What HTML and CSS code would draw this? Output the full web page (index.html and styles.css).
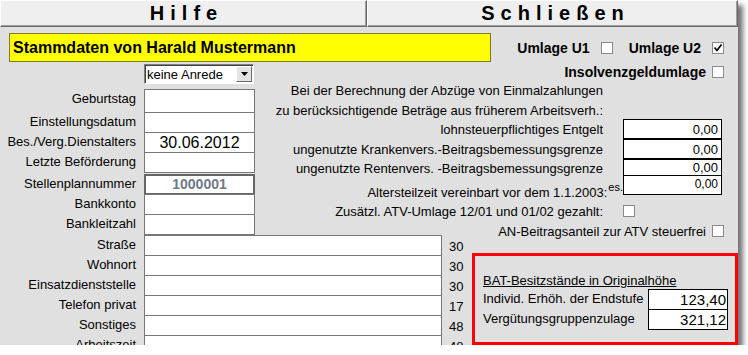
FILE: index.html
```html
<!DOCTYPE html>
<html lang="de">
<head>
    <meta charset="UTF-8">
    <title>Stammdaten</title>
    <link rel="stylesheet" href="styles.css">
</head>
<body>
    <div class="window">
        <div class="toolbar">
            <button class="tool-btn">Hilfe</button>
            <button class="tool-btn">Schließen</button>
        </div>

        <div class="head-row">
            <div class="title-bar">Stammdaten von Harald Mustermann</div>
            <div class="umlage">
                <span class="bold-label">Umlage U1</span>
                <span class="chk"></span>
                <span class="bold-label">Umlage U2</span>
                <span class="chk"><svg width="10" height="10" viewBox="0 0 10 10"><path d="M1.5 4.5 L4 7.5 L8.5 1.5" fill="none" stroke="#000" stroke-width="1.7"/></svg></span>
            </div>
        </div>

        <div class="upper">
            <div class="person">
                <div class="select-row">
                    <div class="select">
                        <span class="select-text">keine Anrede</span>
                        <span class="select-btn"><svg width="7" height="4" viewBox="0 0 7 4"><path d="M0 0 H7 L3.5 4 Z" fill="#000"/></svg></span>
                    </div>
                </div>
                <div class="field-row first"><label>Geburtstag</label><div class="field"></div></div>
                <div class="field-row"><label>Einstellungsdatum</label><div class="field"></div></div>
                <div class="field-row"><label>Bes./Verg.Dienstalters</label><div class="field date">30.06.2012</div></div>
                <div class="field-row"><label>Letzte Beförderung</label><div class="field"></div></div>
                <div class="field-row spaced"><label>Stellenplannummer</label><div class="field number">1000001</div></div>
                <div class="field-row"><label>Bankkonto</label><div class="field"></div></div>
                <div class="field-row"><label>Bankleitzahl</label><div class="field"></div></div>
            </div>

            <div class="calc">
                <div class="check-line insolvenz">
                    <span class="bold-label">Insolvenzgeldumlage</span>
                    <span class="chk"></span>
                </div>
                <div class="note">Bei der Berechnung der Abzüge von Einmalzahlungen</div>
                <div class="note short">zu berücksichtigende Beträge aus früherem Arbeitsverh.:</div>
                <div class="amount-row">
                    <span>lohnsteuerpflichtiges Entgelt</span>
                    <div class="money">0,00</div>
                </div>
                <div class="amount-row">
                    <span>ungenutzte Krankenvers.-Beitragsbemessungsgrenze</span>
                    <div class="money">0,00</div>
                </div>
                <div class="amount-row low">
                    <span>ungenutzte Rentenvers. -Beitragsbemessungsgrenze</span>
                    <div class="money">0,00</div>
                </div>
                <div class="amount-row alters">
                    <span>Altersteilzeit vereinbart vor dem 1.1.2003:<span class="ghost">es.</span></span>
                    <div class="money small">0,00</div>
                </div>
                <div class="amount-row">
                    <span>Zusätzl. ATV-Umlage 12/01 und 01/02 gezahlt:</span>
                    <span class="chk"></span>
                </div>
                <div class="check-line">
                    <span>AN-Beitragsanteil zur ATV steuerfrei</span>
                    <span class="chk"></span>
                </div>
            </div>
        </div>

        <div class="lower">
            <div class="address">
                <div class="field-row"><label>Straße</label><div class="field wide"></div><span class="len">30</span></div>
                <div class="field-row"><label>Wohnort</label><div class="field wide"></div><span class="len">30</span></div>
                <div class="field-row"><label>Einsatzdienststelle</label><div class="field wide"></div><span class="len">30</span></div>
                <div class="field-row"><label>Telefon privat</label><div class="field wide"></div><span class="len">17</span></div>
                <div class="field-row"><label>Sonstiges</label><div class="field wide"></div><span class="len">48</span></div>
                <div class="field-row"><label>Arbeitszeit</label><div class="field wide"></div><span class="len">48</span></div>
            </div>

            <div class="bat">
                <div class="bat-title">BAT-Besitzstände in Originalhöhe</div>
                <div class="bat-row">
                    <span>Individ. Erhöh. der Endstufe</span>
                    <div class="bat-value">123,40</div>
                </div>
                <div class="bat-row">
                    <span>Vergütungsgruppenzulage</span>
                    <div class="bat-value">321,12</div>
                </div>
            </div>
        </div>
    </div>
</body>
</html>
```

FILE: styles.css
```css
*{
    margin: 0;
    padding: 0;
    box-sizing: border-box;
}
body{
    background: #fff;
    font: 13px "Liberation Sans", Arial, sans-serif;
    color: #000;
}
.window{
    width: 738px;
    height: 345px;
    background: #e0e0e0;
    overflow: hidden;
    box-shadow: 5px 5px 5px rgba(0,0,0,.55);
}

/* Kopfzeile mit den beiden Knöpfen */
.toolbar{
    display: grid;
    grid-template-columns: 367px 1fr;
    height: 27px;
}
.tool-btn{
    font: bold 20px "Liberation Sans", Arial, sans-serif;
    letter-spacing: 6px;
    padding-left: 6px;
    color: #000;
    background: #efefef;
    border: 1px solid;
    border-color: #fff #696969 #696969 #fff;
    box-shadow: inset -1px -1px #a0a0a0;
}

.head-row{
    display: flex;
    align-items: center;
    height: 29px;
    margin-top: 6px;
    padding-left: 9px;
}
.title-bar{
    width: 482px;
    height: 29px;
    background: #ff0;
    border: 1px solid #7c7c2a;
    font-weight: bold;
    font-size: 16px;
    line-height: 27px;
    padding-left: 3px;
}
.umlage{
    margin-left: auto;
    padding-right: 14px;
    display: flex;
    align-items: center;
    .bold-label{
        margin-right: 11px;
    }
    .chk{
        margin-right: 16px;
    }
    .chk:last-child{
        margin-right: 0;
    }
}
.bold-label{
    font-weight: bold;
    font-size: 14px;
}
.chk{
    width: 12px;
    height: 12px;
    background: #fff;
    border: 1px solid #8a8a8a;
    display: inline-flex;
    align-items: center;
    justify-content: center;
}

/* oberer Block */
.upper{
    display: grid;
    grid-template-columns: 255px 1fr;
}
.select-row{
    height: 27px;
    padding: 2px 0 0 144px;
}
.select{
    width: 110px;
    height: 20px;
    background: #fff;
    border: 1px solid;
    border-color: #808080 #fff #fff #808080;
    box-shadow: inset 1px 1px #404040;
    display: flex;
    align-items: center;
    padding: 0 1px 0 2px;
    .select-text{
        flex: 1;
        line-height: 18px;
        padding-top: 1px;
    }
    .select-btn{
        width: 16px;
        height: 16px;
        background: #e4e4e4;
        border: 1px solid;
        border-color: #fff #6a6a6a #6a6a6a #fff;
        display: flex;
        align-items: center;
        justify-content: center;
    }
}

.field-row{
    display: flex;
    align-items: flex-start;
    height: 20px;
    label{
        width: 136px;
        margin-right: 8px;
        text-align: right;
        line-height: 20px;
        white-space: nowrap;
    }
}
.field-row.first{
    height: 23px;
    .field{
        height: 24px;
    }
}
.field-row.spaced{
    margin-top: 2px;
}
.field{
    width: 111px;
    height: 21px;
    background: #fff;
    border: 1px solid #777;
}
.field.date{
    font-size: 16px;
    line-height: 19px;
    text-align: center;
}
.field.number{
    border: 2px solid #666;
    font-weight: bold;
    font-size: 14px;
    line-height: 17px;
    text-align: center;
    color: #6f7a88;
}

.calc{
    margin-bottom: -6px;
    .note{
        height: 20px;
        line-height: 20px;
        text-align: right;
        padding-right: 135px;
        white-space: nowrap;
    }
    .note.short{
        height: 18px;
    }
}
.check-line{
    height: 20px;
    display: flex;
    align-items: center;
    justify-content: flex-end;
    column-gap: 6px;
    padding-right: 14px;
}
.check-line.insolvenz{
    height: 19px;
}
.amount-row{
    display: grid;
    grid-template-columns: 1fr 99px;
    column-gap: 20px;
    align-items: center;
    height: 20px;
    padding-right: 16px;
    span{
        text-align: right;
        white-space: nowrap;
    }
}
.amount-row.low{
    height: 16px;
    align-items: start;
    span{
        line-height: 20px;
    }
    .money{
        height: 17px;
        line-height: 16px;
    }
}
.amount-row.alters{
    height: 26px;
    .money{
        align-self: start;
    }
    > span{
        align-self: end;
        line-height: 16px;
    }
}
.ghost{
    font-size: 11px;
    vertical-align: 6px;
    margin-right: -20px;
    margin-left: 1px;
}
.money{
    height: 20px;
    background: #fff;
    border: 1px solid #000;
    text-align: right;
    padding-right: 3px;
    line-height: 19px;
}
.money.small{
    font-size: 12px;
    line-height: 17px;
}

/* unterer Block */
.lower{
    display: grid;
    grid-template-columns: 472px 266px;
    align-items: start;
}
.field.wide{
    width: 298px;
}
.len{
    margin-left: 7px;
    line-height: 23px;
}
.bat{
    margin-top: 18px;
    height: 92px;
    border: 3px solid #f00;
    padding: 16px 7px 0 8px;
    .bat-title{
        text-decoration: underline;
        height: 17px;
        line-height: 17px;
    }
    .bat-row{
        display: grid;
        grid-template-columns: 1fr 80px;
        align-items: start;
        height: 20px;
        span{
            line-height: 20px;
        }
    }
    .bat-value{
        height: 21px;
        background: #fff;
        border: 1px solid #000;
        text-align: right;
        font-size: 15px;
        line-height: 19px;
        padding-right: 1px;
    }
}
```
